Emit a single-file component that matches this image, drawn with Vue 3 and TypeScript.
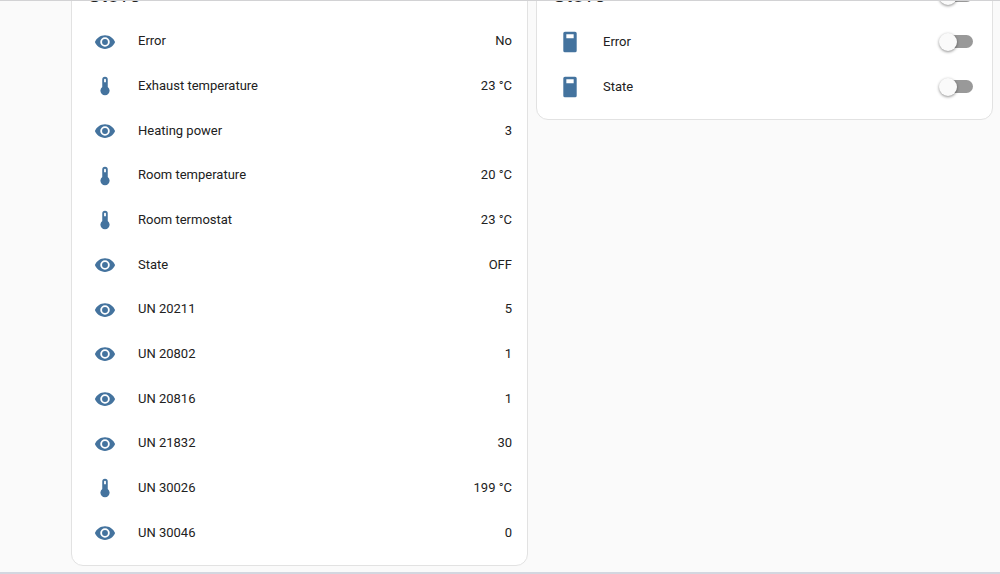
<script setup lang="ts">
import { ref } from 'vue'

type IconName = 'eye' | 'thermometer' | 'switch'

interface Sensor {
  name: string
  value: string
  icon: IconName
}

interface Toggle {
  id: string
  name: string
  on: boolean
}

const icons: Record<IconName, string> = {
  eye: 'M12 8.8a3.2 3.2 0 1 0 0 6.4a3.2 3.2 0 1 0 0-6.4M12 17.2a5.2 5.2 0 1 1 0-10.4a5.2 5.2 0 1 1 0 10.4M12 4.5C7 4.5 2.73 7.61 1 12C2.73 16.39 7 19.5 12 19.5S21.27 16.39 23 12C21.27 7.61 17 4.5 12 4.5Z',
  thermometer: 'M15 13V5A3 3 0 0 0 9 5V13A5 5 0 1 0 15 13M12 4A1 1 0 0 1 13 5V8H11V5A1 1 0 0 1 12 4Z',
  switch: 'M6.5 .7H17.5A1.8 1.8 0 0 1 19.3 2.5V21.5A1.8 1.8 0 0 1 17.5 23.3H6.5A1.8 1.8 0 0 1 4.7 21.5V2.5A1.8 1.8 0 0 1 6.5 .7M8 3.6V8H16V3.6Z',
}

const sensors: Sensor[] = [
  { name: 'Error', value: 'No', icon: 'eye' },
  { name: 'Exhaust temperature', value: '23 °C', icon: 'thermometer' },
  { name: 'Heating power', value: '3', icon: 'eye' },
  { name: 'Room temperature', value: '20 °C', icon: 'thermometer' },
  { name: 'Room termostat', value: '23 °C', icon: 'thermometer' },
  { name: 'State', value: 'OFF', icon: 'eye' },
  { name: 'UN 20211', value: '5', icon: 'eye' },
  { name: 'UN 20802', value: '1', icon: 'eye' },
  { name: 'UN 20816', value: '1', icon: 'eye' },
  { name: 'UN 21832', value: '30', icon: 'eye' },
  { name: 'UN 30026', value: '199 °C', icon: 'thermometer' },
  { name: 'UN 30046', value: '0', icon: 'eye' },
]

const allOn = ref(false)
const toggles = ref<Toggle[]>([
  { id: 'switch-error', name: 'Error', on: false },
  { id: 'switch-state', name: 'State', on: false },
])

function toggleAll() {
  toggles.value.forEach((t) => (t.on = allOn.value))
}
</script>

<template>
  <div class="viewport">
    <main class="board">
      <section class="card sensors">
        <header class="head"><h2>Stove</h2></header>
        <ul class="rows">
          <li v-for="s in sensors" :key="s.name" class="row">
            <svg class="icon" viewBox="0 0 24 24" aria-hidden="true"><path :d="icons[s.icon]" fill-rule="evenodd" /></svg>
            <span class="name">{{ s.name }}</span>
            <span class="value">{{ s.value }}</span>
          </li>
        </ul>
      </section>

      <section class="card">
        <header class="head">
          <h2>Stove</h2>
          <input v-model="allOn" class="toggle" type="checkbox" role="switch" aria-label="Stove" @change="toggleAll" />
        </header>
        <ul class="rows">
          <li v-for="t in toggles" :key="t.id" class="row">
            <svg class="icon" viewBox="0 0 24 24" aria-hidden="true"><path :d="icons.switch" fill-rule="evenodd" /></svg>
            <label class="name" :for="t.id">{{ t.name }}</label>
            <input :id="t.id" v-model="t.on" class="toggle" type="checkbox" role="switch" />
          </li>
        </ul>
      </section>
    </main>
  </div>
</template>

<style>
body {
  background: #fafafa;
}
</style>

<style scoped>
.viewport {
  box-sizing: border-box;
  height: 100vh;
  overflow: hidden;
  display: flex;
  border-top: 1px solid #d2d2d4;
  border-bottom: 2px solid #d3d7e0;
  color: #212121;
  font: 13px/20px Roboto, "Liberation Sans", sans-serif;
}

/* The board is scrolled so that the card headings sit under the top edge. */
.board {
  flex: 1;
  display: grid;
  grid-template-columns: 1fr 1fr;
  align-items: start;
  gap: 8px;
  margin-top: -40px;
  padding: 0 7px 6px 71px;
}

.card {
  box-sizing: border-box;
  padding-bottom: 10px;
  border: 1px solid #e2e2e2;
  border-radius: 12px;
  background: #fff;
}

.sensors {
  height: 100%;
  display: flex;
  flex-direction: column;
}

.head {
  box-sizing: border-box;
  display: flex;
  align-items: flex-end;
  justify-content: space-between;
  height: 57px;
  padding: 0 19px 10px 16px;
}

h2 {
  margin: 0;
  font-size: 21px;
  line-height: 28px;
  font-weight: 400;
}

.head .toggle {
  margin-bottom: 7px;
}

.rows {
  flex: 1;
  display: grid;
  grid-auto-rows: minmax(44px, 1fr);
  margin: 0;
  padding: 0;
  list-style: none;
}

.card:not(.sensors) .rows {
  grid-auto-rows: 45px;
}

.row {
  display: flex;
  align-items: center;
  padding: 0 19px 0 22px;
}

.sensors .row {
  padding-right: 15px;
}

.icon {
  width: 22px;
  height: 22px;
  margin-top: 1px;
  fill: #44739e;
}

.name {
  flex: 1;
  margin-left: 22px;
}

.toggle {
  appearance: none;
  width: 31px;
  height: 13px;
  margin: 0;
  border-radius: 7px;
  background: #999;
  display: flex;
  align-items: center;
  cursor: pointer;
}

.toggle::before {
  content: "";
  flex: none;
  width: 18px;
  height: 18px;
  margin-left: -3px;
  border-radius: 50%;
  background: #fafafa;
  box-shadow: 0 1px 3px rgba(0, 0, 0, 0.45);
}

.toggle:checked {
  background: #8fc9ed;
}

.toggle:checked::before {
  margin-left: 16px;
  background: #03a9f4;
}
</style>
